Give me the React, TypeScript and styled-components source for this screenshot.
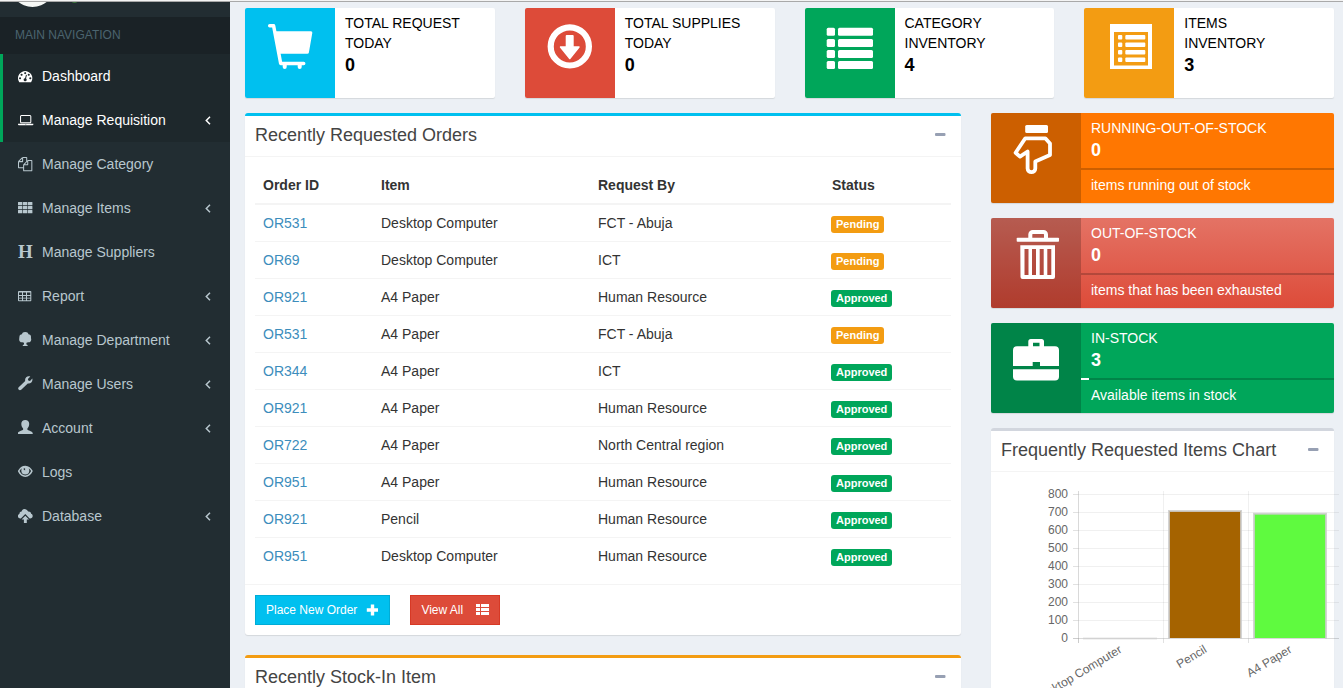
import React from "react";
import styled, { createGlobalStyle } from "styled-components";

const GlobalStyle = createGlobalStyle`
  *, *::before, *::after { box-sizing: border-box; }
  html { overflow: hidden; }
  body {
    margin: 0;
    background: #ecf0f5;
    color: #333;
    font-family: "Liberation Sans", Arial, sans-serif;
    font-size: 14px;
    line-height: 20px;
  }
  h3, p, ul { margin: 0; padding: 0; font-weight: 400; }
  ul { list-style: none; }
  a { text-decoration: none; color: #3c8dbc; }
  button { font-family: inherit; cursor: pointer; }
`;

const Page = styled.div`
  display: flex;
  min-height: 100vh;
  border-top: 1px solid #f4f4f4;
`;

const Sidebar = styled.aside`
  flex: 0 0 230px;
  background: #222d32;
  border-top: 1px solid #a9a9a9;
`;

const UserPanel = styled.div`
  display: flex;
  align-items: flex-end;
  gap: 15px;
  height: 15px;
  padding: 0 10px 10px;
  overflow: hidden;
`;

const Avatar = styled.span`
  flex: none;
  width: 45px;
  height: 45px;
  border-radius: 50%;
  background: #f5f7f5;
`;

const OnlineDot = styled.span`
  width: 9px;
  height: 9px;
  margin: 0 0 4px;
  border-radius: 50%;
  background: #3c763d;
`;

const NavHeading = styled.div`
  padding: 8px 15px 9px;
  background: #1a2226;
  color: #4b646f;
  font-size: 12px;
`;

const NavLink = styled.a<{ $active?: boolean }>`
  display: flex;
  align-items: center;
  height: 44px;
  padding: 0 19px 0 15px;
  border-left: 3px solid ${(p) => (p.$active ? "#00a65a" : "transparent")};
  background: ${(p) => (p.$active ? "#1e282c" : "transparent")};
  color: ${(p) => (p.$active ? "#fff" : "#b8c7ce")};
`;

const NavIcon = styled.span`
  display: flex;
  flex: 0 0 24px;
`;

const NavLabel = styled.span`
  flex: 1;
`;

const SerifGlyph = styled.span`
  width: 15px;
  font-family: "Liberation Serif", serif;
  font-size: 19px;
  font-weight: 700;
  line-height: 16px;
  text-align: center;
`;

const Content = styled.main`
  flex: 1;
  min-width: 0;
  padding: 6px 9px 0 15px;
  border-top: 1px solid #a9a9a9;
`;

const Grid = styled.div`
  display: grid;
  grid-template-columns: repeat(12, 1fr);
  column-gap: 30px;
`;

const Column = styled.div<{ $span: number }>`
  grid-column: span ${(p) => p.$span};
  min-width: 0;
`;

const InfoBox = styled.section<{ $fill?: string }>`
  display: flex;
  min-height: 90px;
  margin-bottom: 15px;
  border-radius: 2px;
  overflow: hidden;
  background: ${(p) => p.$fill ?? "#fff"};
  color: ${(p) => (p.$fill ? "#fff" : "#000")};
  box-shadow: 0 1px 1px rgba(0, 0, 0, 0.1);
`;

const InfoIcon = styled.span<{ $fill?: string }>`
  display: flex;
  flex: 0 0 90px;
  justify-content: center;
  align-items: flex-start;
  padding-top: 12px;
  background: ${(p) => p.$fill ?? "rgba(0, 0, 0, 0.2)"};
  color: #fff;
`;

const InfoBody = styled.div`
  flex: 1;
  padding: 5px 10px;
`;

const InfoTitle = styled.span`
  display: block;
  text-transform: uppercase;
`;

const InfoNumber = styled.strong`
  display: block;
  font-size: 18px;
  line-height: 24px;
`;

const Meter = styled.div`
  height: 2px;
  margin: 6px -10px 5px;
  background: rgba(0, 0, 0, 0.2);
`;

const MeterFill = styled.div`
  height: 2px;
  background: #fff;
`;

const Box = styled.section<{ $accent: string }>`
  margin-bottom: 20px;
  border-top: 3px solid ${(p) => p.$accent};
  border-radius: 3px;
  background: #fff;
  box-shadow: 0 1px 1px rgba(0, 0, 0, 0.1);
`;

const BoxHeader = styled.header`
  display: flex;
  justify-content: space-between;
  padding: 9px 10px 11px;
  border-bottom: 1px solid #f4f4f4;
`;

const BoxTitle = styled.h3`
  color: #444;
  font-size: 18px;
  line-height: 20px;
`;

const CollapseButton = styled.button`
  display: flex;
  padding: 8px 5px;
  border: 0;
  background: transparent;
  color: #97a0b3;
`;

const BoxBody = styled.div`
  padding: 10px;
`;

const BoxFooter = styled.footer`
  display: flex;
  gap: 20px;
  padding: 10px;
  border-top: 1px solid #f4f4f4;
`;

const OrdersTable = styled.table`
  width: 100%;
  border-collapse: collapse;
  table-layout: fixed;

  th, td { padding: 8px; text-align: left; }
  th { border-bottom: 2px solid #f4f4f4; }
  td { border-top: 1px solid #f4f4f4; }
  th:nth-child(1) { width: 118px; }
  th:nth-child(2) { width: 217px; }
  th:nth-child(3) { width: 234px; }
`;

const StatusLabel = styled.span<{ $pending: boolean }>`
  display: inline-block;
  vertical-align: middle;
  margin-left: -1px;
  padding: 0 5px;
  border-radius: 3px;
  background: ${(p) => (p.$pending ? "#f39c12" : "#00a65a")};
  color: #fff;
  font-size: 11px;
  font-weight: 700;
  line-height: 17px;
`;

const ActionButton = styled.button<{ $fill: string; $edge: string; $gap: number }>`
  display: flex;
  align-items: center;
  gap: ${(p) => p.$gap}px;
  height: 30px;
  padding: 0 10px;
  border: 1px solid ${(p) => p.$edge};
  background: ${(p) => p.$fill};
  color: #fff;
  font-size: 12px;
`;

const ChartSvg = styled.svg`
  display: block;
  overflow: visible;
  font-family: "Liberation Sans", Arial, sans-serif;
  font-size: 12px;
`;

/* ---- icons ---- */

function SmallIcon({ children, box = "0 0 16 16" }: { children: React.ReactNode; box?: string }) {
  return (
    <svg width="16" height="16" viewBox={box} fill="currentColor" aria-hidden="true">
      {children}
    </svg>
  );
}

function BigIcon({ children }: { children: React.ReactNode }) {
  return (
    <svg width="48" height="51" viewBox="0 -3 48 51" fill="currentColor" aria-hidden="true">
      {children}
    </svg>
  );
}

const dashboardIcon = (
  <SmallIcon box="0 -128 2000 2000">
    <path d="M384 1152q0-53-37.5-90.5t-90.5-37.5-90.5 37.5-37.5 90.5 37.5 90.5 90.5 37.5 90.5-37.5 37.5-90.5zm192-448q0-53-37.5-90.5t-90.5-37.5-90.5 37.5-37.5 90.5 37.5 90.5 90.5 37.5 90.5-37.5 37.5-90.5zm428 481l101-382q6-26-7.5-48.5t-38.5-29.5-48 6.5-30 39.5l-101 382q-60 5-107 43.5t-63 98.5q-20 77 20 146t117 89 146-20 89-117q16-60-6-117t-72-91zm660-33q0-53-37.5-90.5t-90.5-37.5-90.5 37.5-37.5 90.5 37.5 90.5 90.5 37.5 90.5-37.5 37.5-90.5zm-640-640q0-53-37.5-90.5t-90.5-37.5-90.5 37.5-37.5 90.5 37.5 90.5 90.5 37.5 90.5-37.5 37.5-90.5zm448 192q0-53-37.5-90.5t-90.5-37.5-90.5 37.5-37.5 90.5 37.5 90.5 90.5 37.5 90.5-37.5 37.5-90.5zm320 448q0 261-141 483-19 29-54 29h-1402q-35 0-54-29-141-221-141-483 0-182 71-348t191-286 286-191 348-71 348 71 286 191 191 286 71 348z" />
  </SmallIcon>
);

const laptopIcon = (
  <SmallIcon box="0 -128 2000 2000">
    <path d="M416 1280q-66 0-113-47t-47-113v-704q0-66 47-113t113-47h1088q66 0 113 47t47 113v704q0 66-47 113t-113 47h-1088zm-32-864v704q0 13 9.5 22.5t22.5 9.5h1088q13 0 22.5-9.5t9.5-22.5v-704q0-13-9.500-22.500t-22.500-9.500h-1088q-13 0-22.500 9.500t-9.500 22.500zm1376 928h160v96q0 40-47 68t-113 28h-1600q-66 0-113-28t-47-68v-96h1760zm-720 96q16 0 16-16t-16-16h-160q-16 0-16 16t16 16h160z" />
  </SmallIcon>
);

const filesIcon = (
  <SmallIcon box="0 -128 2000 2000">
    <path d="M1696 384q40 0 68 28t28 68v1216q0 40-28 68t-68 28h-960q-40 0-68-28t-28-68v-288h-544q-40 0-68-28t-28-68v-672q0-40 20-88t48-76l408-408q28-28 76-48t88-20h416q40 0 68 28t28 68v328q68-40 128-40h416zm-544 213l-299 299h299v-299zm-640-384l-299 299h299v-299zm196 647l316-316v-416h-384v416q0 40-28 68t-68 28h-416v640h512v-256q0-40 20-88t48-76zm956 804v-1152h-384v416q0 40-28 68t-68 28h-416v640h896z" />
  </SmallIcon>
);

const blocksIcon = (
  <SmallIcon>
    {[2, 6, 10].map((y) =>
      [0, 5, 10].map((x) => <rect key={`${x}-${y}`} x={x} y={y} width="4.400" height="3.300" rx="0.300" />)
    )}
  </SmallIcon>
);

const tableIcon = (
  <SmallIcon>
    <path
      fillRule="evenodd"
      d="M1 3H12.500a.8.8 0 0 1 .8.8V12.400a.8.8 0 0 1-.8.8H1a1 1 0 0 1-1-1V4a1 1 0 0 1 1-1ZM1 4.600V7H4V4.600ZM5 4.600V7H8V4.600ZM9 4.600V7h3.300V4.600ZM1 8v1.700H4V8ZM5 8v1.700H8V8ZM9 8v1.700h3.300V8ZM1 10.600v1.600H4v-1.600ZM5 10.600v1.600H8v-1.600ZM9 10.600v1.600h3.300v-1.600Z"
    />
  </SmallIcon>
);

const treeIcon = (
  <SmallIcon>
    <circle cx="7.200" cy="3.400" r="3.400" />
    <circle cx="4.200" cy="5" r="2.800" />
    <circle cx="10.200" cy="5" r="2.800" />
    <circle cx="4" cy="7.400" r="2.800" />
    <circle cx="10.400" cy="7.400" r="2.800" />
    <circle cx="7.200" cy="7.800" r="3.200" />
    <path d="M6 9h2.400v3.500l1.200.5v1H4.800v-1l1.200-.5Z" />
  </SmallIcon>
);

const wrenchIcon = (
  <SmallIcon>
    <path d="M12.300.5 9.900 2.900l.4 1.600 1.700.4L14.300 2.600c.4 1.700 0 3-1 3.900-1 .9-2.300 1.200-3.500.9L3.200 13.700c-.8.7-1.900.6-2.500-.1-.7-.7-.7-1.700 0-2.400L7.200 4.900C6.900 3.600 7.200 2.300 8.200 1.300 9.300.2 10.800-.1 12.300.5Z" />
  </SmallIcon>
);

const userIcon = (
  <SmallIcon>
    <path d="M7.200 0c2.400 0 4 1.500 4 3.800 0 2-.7 3.700-1.800 4.800v1.100c.7.600 3.900 1.500 4.700 2.300.5.500.7 1.300.7 2H-.2c0-.7.2-1.500.7-2 .8-.8 3.900-1.700 4.600-2.300V8.600C4 7.500 3.300 5.800 3.300 3.800 3.300 1.500 4.900 0 7.200 0Z" />
  </SmallIcon>
);

const eyeIcon = (
  <SmallIcon>
    <path
      fillRule="evenodd"
      d="M7.300 1.700c3.300 0 5.900 2.100 7.500 5.400-1.600 3.700-4.200 5.900-7.500 5.900S1.400 10.800-.2 7.100c1.600-3.300 4.200-5.400 7.500-5.400ZM4 4.200C2.900 5 2.100 6 1.500 7.100c1.300 2.700 3.300 4.300 5.800 4.300s4.500-1.600 5.800-4.300C12.500 6 11.700 5 10.600 4.200c.5.700.7 1.500.7 2.300a4 4 0 0 1-8 0c0-.8.2-1.600.7-2.300ZM7.300 4c-.8 0-1.500.3-2 .9l1.800 1.600V4Z"
    />
  </SmallIcon>
);

const cloudIcon = (
  <SmallIcon>
    <path d="M6.200 1c1.900 0 3.200.9 3.900 2.500 1.900-.2 3 .8 3 2.200 1 .3 1.600 1.200 1.600 2.200 0 1.500-1 2.500-2.600 2.500h-.5L7.300 5.900 2.900 10.400h-.5C.9 10.300-.1 9.300-.1 8c0-1 .6-1.900 1.600-2.300-.1-1.300.8-2.200 2.100-2.200C4 2 5 1 6.200 1Z" />
    <path d="M7.300 7.700 11 11.500H8.800V15H5.900v-3.500H3.600Z" />
  </SmallIcon>
);

const angleIcon = (
  <svg width="6" height="9" viewBox="0 0 6 9" fill="none" stroke="currentColor" strokeWidth="1.500" aria-hidden="true">
    <path d="M5 .8 1.300 4.500 5 8.200" />
  </svg>
);

const minusIcon = (
  <svg width="11" height="3" viewBox="0 0 11 3" fill="currentColor" aria-hidden="true">
    <rect width="10.500" height="3" rx="1" />
  </svg>
);

const plusIcon = (
  <svg width="13" height="13" viewBox="0 0 13 13" fill="currentColor" aria-hidden="true">
    <path d="M4.800.5h3.400v3.800H12v3.400H8.200v3.800H4.800V7.700H.8V4.300h4Z" />
  </svg>
);

const rowsIcon = (
  <svg width="13" height="12" viewBox="0 0 13 12" fill="currentColor" aria-hidden="true">
    {[0, 4, 8].map((y) => (
      <React.Fragment key={y}>
        <rect y={y} width="4" height="3" />
        <rect x="5" y={y} width="8" height="3" />
      </React.Fragment>
    ))}
  </svg>
);

const cartIcon = (
  <BigIcon>
    <path
      d="M3.700 2.800H7.600L14.700 40.500H37.700"
      fill="none"
      stroke="currentColor"
      strokeWidth="3.500"
      strokeLinecap="round"
      strokeLinejoin="round"
    />
    <path d="M9 8.300H44.800a1.500 1.500 0 0 1 1.500 1.800L42.900 29.400a1.600 1.600 0 0 1-1.600 1.300H13Z" />
    <rect x="16.700" y="40" width="4" height="6" rx="2" />
    <rect x="31.700" y="40" width="4" height="6" rx="2" />
  </BigIcon>
);

const downloadIcon = (
  <BigIcon>
    <circle cx="23.800" cy="23.400" r="19.100" fill="none" stroke="currentColor" strokeWidth="6.200" />
    <path d="M20.700 12h6a1 1 0 0 1 1 1v10.300h5c1 0 1.300.7.700 1.400L24.600 35.700a1 1 0 0 1-1.600 0L14.100 24.700c-.6-.7-.3-1.400.7-1.400h4.900V13a1 1 0 0 1 1-1Z" />
  </BigIcon>
);

const listIcon = (
  <BigIcon>
    {[4.8, 15.9, 27, 38.1].map((y) => (
      <React.Fragment key={y}>
        <rect x="0.700" y={y} width="8.300" height="8" rx="1.500" />
        <rect x="12" y={y} width="35" height="8" rx="1.500" />
      </React.Fragment>
    ))}
  </BigIcon>
);

const listAltIcon = (
  <BigIcon>
    <path fillRule="evenodd" d="M5 1h42v45H5ZM9 9v33.500h34V9Z" />
    {[12, 19.5, 27, 34.5].map((y) => (
      <React.Fragment key={y}>
        <rect x="13" y={y} width="4.300" height="4.500" rx="1" />
        <rect x="20.300" y={y} width="20" height="4.500" rx="1" />
      </React.Fragment>
    ))}
  </BigIcon>
);

const handIcon = (
  <BigIcon>
    <rect x="13.200" y="-3" width="22.800" height="8" rx="1.500" />
    <path
      d="M13.300 10.300H33.300L38 15.500V27L23.300 33.600V40.500C23.300 45.300 15.600 45.300 15.600 40.500V23.500L8 28.600 3.600 24.800Z"
      fill="none"
      stroke="currentColor"
      strokeWidth="3.800"
      strokeLinejoin="round"
    />
  </BigIcon>
);

const trashIcon = (
  <BigIcon>
    <path d="M18.300 6V1.500a2.500 2.500 0 0 1 2.500-2.500H31.500a2.500 2.500 0 0 1 2.500 2.500V6" fill="none" stroke="currentColor" strokeWidth="4" />
    <rect x="4.700" y="4.700" width="42.300" height="4" rx="0.800" />
    <path
      fillRule="evenodd"
      d="M8.300 12.300H43V44a2 2 0 0 1-2 2H10.500a2 2 0 0 1-2-2ZM12.500 16v26h4V16ZM20 16v26h4V16ZM27.700 16v26h4V16ZM35.300 16v26h4V16Z"
    />
  </BigIcon>
);

const briefcaseIcon = (
  <BigIcon>
    <path
      fillRule="evenodd"
      d="M16.300 8.300V3.500A2.500 2.500 0 0 1 18.800 1H29.500A2.500 2.500 0 0 1 32 3.500V8.300H43a4 4 0 0 1 4 4V28H28V24H20.700V28H1V12.300a4 4 0 0 1 4-4ZM21 4.800V8.300H27.500V4.800Z"
    />
    <path d="M1 31.300H47V38.500a4 4 0 0 1-4 4H5a4 4 0 0 1-4-4Z" />
  </BigIcon>
);

/* ---- data ---- */

const navItems = [
  { label: "Dashboard", icon: dashboardIcon, active: true },
  { label: "Manage Requisition", icon: laptopIcon, active: true, nested: true },
  { label: "Manage Category", icon: filesIcon },
  { label: "Manage Items", icon: blocksIcon, nested: true },
  { label: "Manage Suppliers", icon: <SerifGlyph aria-hidden="true">H</SerifGlyph> },
  { label: "Report", icon: tableIcon, nested: true },
  { label: "Manage Department", icon: treeIcon, nested: true },
  { label: "Manage Users", icon: wrenchIcon, nested: true },
  { label: "Account", icon: userIcon, nested: true },
  { label: "Logs", icon: eyeIcon },
  { label: "Database", icon: cloudIcon, nested: true },
];

const summaries = [
  { lines: ["Total Request", "Today"], value: 0, fill: "#00c0ef", icon: cartIcon },
  { lines: ["Total Supplies", "Today"], value: 0, fill: "#dd4b39", icon: downloadIcon },
  { lines: ["Category", "Inventory"], value: 4, fill: "#00a65a", icon: listIcon },
  { lines: ["Items", "Inventory"], value: 3, fill: "#f39c12", icon: listAltIcon },
];

const stockLevels = [
  { title: "Running-out-of-stock", value: 0, note: "items running out of stock", percent: 0, fill: "#ff7701", icon: handIcon },
  { title: "Out-of-stock", value: 0, note: "items that has been exhausted", percent: 0, fill: "linear-gradient(#e47365, #dd4b39)", icon: trashIcon },
  { title: "In-stock", value: 3, note: "Available items in stock", percent: 3, fill: "#00a65a", icon: briefcaseIcon },
];

const orders = [
  ["OR531", "Desktop Computer", "FCT - Abuja", "Pending"],
  ["OR69", "Desktop Computer", "ICT", "Pending"],
  ["OR921", "A4 Paper", "Human Resource", "Approved"],
  ["OR531", "A4 Paper", "FCT - Abuja", "Pending"],
  ["OR344", "A4 Paper", "ICT", "Approved"],
  ["OR921", "A4 Paper", "Human Resource", "Approved"],
  ["OR722", "A4 Paper", "North Central region", "Approved"],
  ["OR951", "A4 Paper", "Human Resource", "Approved"],
  ["OR921", "Pencil", "Human Resource", "Approved"],
  ["OR951", "Desktop Computer", "Human Resource", "Approved"],
];

const bars = [
  { label: "Desktop Computer", value: 0, fill: "#ddd" },
  { label: "Pencil", value: 705, fill: "#a56300" },
  { label: "A4 Paper", value: 690, fill: "#5ffa3f" },
];

function RequestChart() {
  const base = 156;
  const ticks = [800, 700, 600, 500, 400, 300, 200, 100, 0];
  return (
    <ChartSvg width="100%" height="250" role="img" aria-label="Frequently requested items">
      {ticks.map((t) => {
        const y = base - (t / 100) * 18 + 0.5;
        return (
          <g key={t}>
            <path d={`M72 ${y}H338`} stroke="#000" strokeOpacity={t ? 0.06 : 0.15} />
            <path d={`M72 ${y}H77`} stroke="#000" strokeOpacity="0.060" />
            <text x="67" y={y + 3} textAnchor="end" fill="#666">{t}</text>
          </g>
        );
      })}
      {[77.5, 162.5, 247.5].map((x, i) => (
        <g key={x} stroke="#000">
          <path d={`M${x} 9V161`} strokeOpacity={i ? 0.06 : 0.15} />
          <path d={`M${x} 157V161`} strokeOpacity="0.060" />
        </g>
      ))}
      {bars.map((bar, i) => {
        const left = 83 + i * 85;
        const height = bar.value * 0.18;
        const top = base - height;
        return (
          <g key={bar.label}>
            <rect x={left} y={top} width="72" height={height} fill={bar.fill} />
            <path
              d={bar.value ? `M${left} ${base + 1}V${top}H${left + 72}V${base + 1}` : `M${left - 1} ${base + 0.5}h74`}
              fill="none"
              stroke="#ccc"
              strokeOpacity={bar.value ? 0.85 : 0.5}
              strokeWidth="2"
            />
            <text
              transform={`translate(${left + 37} 167) rotate(-31)`}
              textAnchor="end"
              dominantBaseline="middle"
              fill="#666"
            >
              {bar.label}
            </text>
          </g>
        );
      })}
    </ChartSvg>
  );
}

function BoxTop({ title }: { title: string }) {
  return (
    <BoxHeader>
      <BoxTitle>{title}</BoxTitle>
      <CollapseButton type="button" aria-label={`Collapse ${title}`}>{minusIcon}</CollapseButton>
    </BoxHeader>
  );
}

export default function App() {
  return (
    <>
      <GlobalStyle />
      <Page>
        <Sidebar>
          <UserPanel>
            <Avatar />
            <OnlineDot />
          </UserPanel>
          <NavHeading>MAIN NAVIGATION</NavHeading>
          <nav>
            <ul>
              {navItems.map((item) => (
                <li key={item.label}>
                  <NavLink href="#" $active={item.active}>
                    <NavIcon>{item.icon}</NavIcon>
                    <NavLabel>{item.label}</NavLabel>
                    {item.nested && angleIcon}
                  </NavLink>
                </li>
              ))}
            </ul>
          </nav>
        </Sidebar>

        <Content>
          <Grid>
            {summaries.map((s) => (
              <Column $span={3} key={s.lines.join(" ")}>
                <InfoBox>
                  <InfoIcon $fill={s.fill}>{s.icon}</InfoIcon>
                  <InfoBody>
                    {s.lines.map((line) => <InfoTitle key={line}>{line}</InfoTitle>)}
                    <InfoNumber>{s.value}</InfoNumber>
                  </InfoBody>
                </InfoBox>
              </Column>
            ))}
          </Grid>

          <Grid>
            <Column $span={8}>
              <Box $accent="#00c0ef">
                <BoxTop title="Recently Requested Orders" />
                <BoxBody>
                  <OrdersTable>
                    <thead>
                      <tr>
                        <th>Order ID</th>
                        <th>Item</th>
                        <th>Request By</th>
                        <th>Status</th>
                      </tr>
                    </thead>
                    <tbody>
                      {orders.map(([id, item, by, status], i) => (
                        <tr key={i}>
                          <td><a href="#">{id}</a></td>
                          <td>{item}</td>
                          <td>{by}</td>
                          <td><StatusLabel $pending={status === "Pending"}>{status}</StatusLabel></td>
                        </tr>
                      ))}
                    </tbody>
                  </OrdersTable>
                </BoxBody>
                <BoxFooter>
                  <ActionButton type="button" $fill="#00c0ef" $edge="#00acd6" $gap={9}>
                    Place New Order {plusIcon}
                  </ActionButton>
                  <ActionButton type="button" $fill="#dd4b39" $edge="#d73925" $gap={13}>
                    View All {rowsIcon}
                  </ActionButton>
                </BoxFooter>
              </Box>
              <Box $accent="#f39c12">
                <BoxTop title="Recently Stock-In Item" />
              </Box>
            </Column>

            <Column $span={4}>
              {stockLevels.map((s) => (
                <InfoBox $fill={s.fill} key={s.title}>
                  <InfoIcon>{s.icon}</InfoIcon>
                  <InfoBody>
                    <InfoTitle>{s.title}</InfoTitle>
                    <InfoNumber>{s.value}</InfoNumber>
                    <Meter>
                      <MeterFill style={{ width: `${s.percent}%` }} />
                    </Meter>
                    <span>{s.note}</span>
                  </InfoBody>
                </InfoBox>
              ))}
              <Box $accent="#d2d6de">
                <BoxTop title="Frequently Requested Items Chart" />
                <BoxBody>
                  <RequestChart />
                </BoxBody>
              </Box>
            </Column>
          </Grid>
        </Content>
      </Page>
    </>
  );
}
